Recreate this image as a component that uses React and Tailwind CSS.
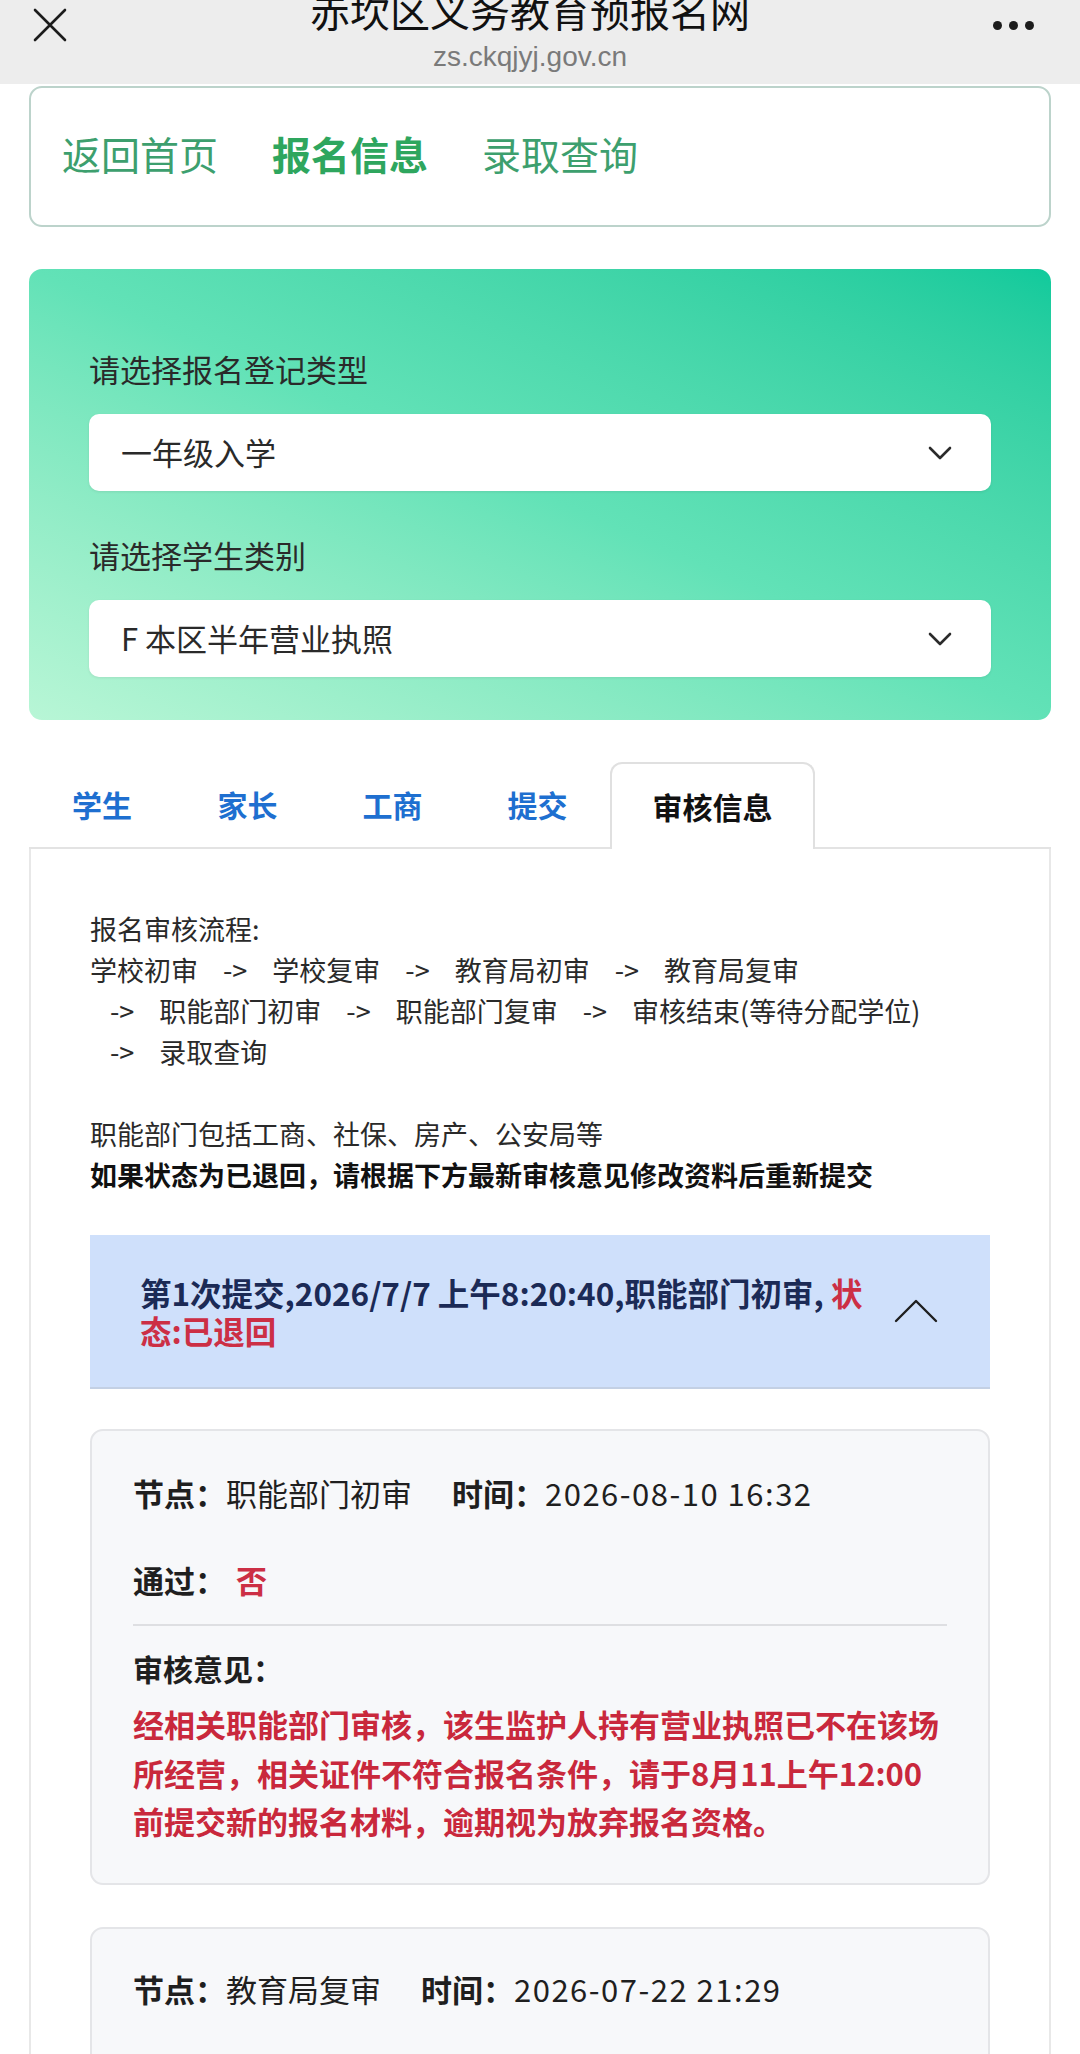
import React from "react";

const F = { fontFamily: '"Noto Sans CJK SC", "Noto Sans", sans-serif' };

function ChevronDown() {
  return (
    <svg width="26" height="16" viewBox="0 0 26 16" fill="none">
      <polyline points="3,3 13,13 23,3" stroke="#2b2b2b" strokeWidth="2.6" strokeLinecap="round" strokeLinejoin="round" />
    </svg>
  );
}

function Arrow({ first }) {
  return <span className={first ? "inline-block mr-[25px]" : "inline-block mx-[25px]"}>-&gt;</span>;
}

export default function App() {
  return (
    <div className="w-[1080px] h-[2054px] overflow-hidden bg-white text-[#222]" style={F}>
      {/* top bar */}
      <div className="h-[84px] bg-[#ededed] flex items-start justify-between px-[33px] overflow-hidden">
        <svg className="mt-[8px]" width="34" height="34" viewBox="0 0 34 34" fill="none">
          <path d="M2 2 L32 32 M32 2 L2 32" stroke="#1c1c1c" strokeWidth="2.6" strokeLinecap="round" />
        </svg>
        <div className="flex flex-col items-center">
          <div className="-mt-[14px] text-[40px] leading-[48px] text-[#111]">赤坎区义务教育预报名网</div>
          <div className="mt-[7px] text-[28px] leading-[32px] text-[#7a7a7a]" style={{ fontFamily: '"Liberation Sans", "Noto Sans", sans-serif' }}>zs.ckqjyj.gov.cn</div>
        </div>
        <div className="mt-[21px] flex gap-[7px] pr-[13px]">
          <span className="w-[9px] h-[9px] rounded-full bg-[#1c1c1c]"></span>
          <span className="w-[9px] h-[9px] rounded-full bg-[#1c1c1c]"></span>
          <span className="w-[9px] h-[9px] rounded-full bg-[#1c1c1c]"></span>
        </div>
      </div>

      <div className="px-[29px]">
        {/* nav card */}
        <div className="mt-[2px] h-[141px] border-2 border-[#bcd3cb] rounded-[13px] flex items-center pl-[31px] pb-[6px] gap-[54px] text-[39px] leading-none">
          <span className="text-[#3d9f6e]">返回首页</span>
          <span className="text-[#2ea65e] font-bold">报名信息</span>
          <span className="text-[#3d9f6e]">录取查询</span>
        </div>

        {/* gradient card */}
        <div className="mt-[42px] h-[451px] rounded-[13px] bg-gradient-to-tr from-[#b8f6d6] via-[#62e2b7] to-[#0fca9c] px-[60px] pt-[80px]">
          <div className="text-[31px] leading-[40px] text-[#2a2a2a]">请选择报名登记类型</div>
          <div className="mt-[25px] h-[77px] bg-white rounded-[10px] shadow-[0_1px_3px_rgba(0,0,0,0.08)] flex items-center justify-between pl-[32px] pr-[38px]">
            <span className="text-[31px] text-[#2a2a2a]">一年级入学</span>
            <ChevronDown />
          </div>
          <div className="mt-[44px] text-[31px] leading-[40px] text-[#2a2a2a]">请选择学生类别</div>
          <div className="mt-[25px] h-[77px] bg-white rounded-[10px] shadow-[0_1px_3px_rgba(0,0,0,0.08)] flex items-center justify-between pl-[32px] pr-[38px]">
            <span className="text-[31px] text-[#2a2a2a]">F 本区半年营业执照</span>
            <ChevronDown />
          </div>
        </div>

        {/* tabs */}
        <div className="mt-[42px] flex items-stretch h-[87px] border-b-2 border-[#e3e3e3]">
          <div className="w-[146px] flex items-center justify-center text-[30px] font-bold text-[#1e6fd0]">学生</div>
          <div className="w-[145px] flex items-center justify-center text-[30px] font-bold text-[#1e6fd0]">家长</div>
          <div className="w-[145px] flex items-center justify-center text-[30px] font-bold text-[#1e6fd0]">工商</div>
          <div className="w-[145px] flex items-center justify-center text-[30px] font-bold text-[#1e6fd0]">提交</div>
          <div className="w-[205px] -mb-[2px] bg-white border-2 border-b-0 border-[#e0e0e0] rounded-t-[12px] flex items-center justify-center text-[30px] font-bold text-[#111]">审核信息</div>
        </div>

        {/* panel */}
        <div className="border-x-2 border-[#e8e8e8] px-[59px] pt-[59px] pb-[200px]">
          <div className="text-[27px] leading-[41px] text-[#2a2a2a] whitespace-nowrap">
            <div>报名审核流程:</div>
            <div>学校初审<Arrow />学校复审<Arrow />教育局初审<Arrow />教育局复审</div>
            <div className="pl-[20px]"><Arrow first />职能部门初审<Arrow />职能部门复审<Arrow />审核结束(等待分配学位)</div>
            <div className="pl-[20px]"><Arrow first />录取查询</div>
            <div className="h-[41px]"></div>
            <div>职能部门包括工商、社保、房产、公安局等</div>
            <div className="font-bold text-[#111]">如果状态为已退回，请根据下方最新审核意见修改资料后重新提交</div>
          </div>

          {/* accordion header */}
          <div className="mt-[40px] h-[154px] bg-[#cfe0fb] border-b-2 border-[#c3d0e4] flex items-center pl-[50px] pr-[52px]">
            <div className="flex-1 text-[31.5px] leading-[38px] font-bold text-[#1b2a56] whitespace-nowrap">
              <div>第1次提交,2026/7/7 上午8:20:40,职能部门初审, <span className="text-[#cc2f45]">状</span></div>
              <div className="text-[#cc2f45]">态:已退回</div>
            </div>
            <svg width="44" height="24" viewBox="0 0 44 24" fill="none">
              <polyline points="2,22 22,2 42,22" stroke="#1f1f1f" strokeWidth="2.4" strokeLinecap="round" strokeLinejoin="round" />
            </svg>
          </div>

          {/* review card 1 */}
          <div className="mt-[40px] bg-[#f7f8fa] border-2 border-[#e4e5e8] rounded-[13px] px-[41px] pt-[42px] pb-[37px]">
            <div className="flex items-center h-[40px] text-[31px] text-[#1f1f1f] whitespace-nowrap">
              <span className="font-bold">节点：</span>
              <span>职能部门初审</span>
              <span className="font-bold ml-[40px]">时间：</span>
              <span className="tracking-[1.5px]">2026-08-10 16:32</span>
            </div>
            <div className="mt-[47px] flex items-center h-[40px] text-[31px] text-[#1f1f1f]">
              <span className="font-bold">通过：</span>
              <span className="ml-[10px] font-bold text-[#cc2f45]">否</span>
            </div>
            <div className="mt-[24px] h-[2px] bg-[#dedfe2]"></div>
            <div className="mt-[22px] h-[40px] flex items-center text-[30px] font-bold text-[#1f1f1f]">审核意见：</div>
            <div className="mt-[12px] text-[31px] leading-[48.5px] font-bold text-[#c9283c] whitespace-nowrap">
              <div>经相关职能部门审核，该生监护人持有营业执照已不在该场</div>
              <div>所经营，相关证件不符合报名条件，请于8月11上午12:00</div>
              <div>前提交新的报名材料，逾期视为放弃报名资格。</div>
            </div>
          </div>

          {/* review card 2 */}
          <div className="mt-[42px] bg-[#f7f8fa] border-2 border-[#e4e5e8] rounded-[13px] px-[41px] pt-[41px] pb-[120px]">
            <div className="flex items-center h-[40px] text-[31px] text-[#1f1f1f] whitespace-nowrap">
              <span className="font-bold">节点：</span>
              <span>教育局复审</span>
              <span className="font-bold ml-[40px]">时间：</span>
              <span className="tracking-[1.5px]">2026-07-22 21:29</span>
            </div>
          </div>
        </div>
      </div>
    </div>
  );
}
